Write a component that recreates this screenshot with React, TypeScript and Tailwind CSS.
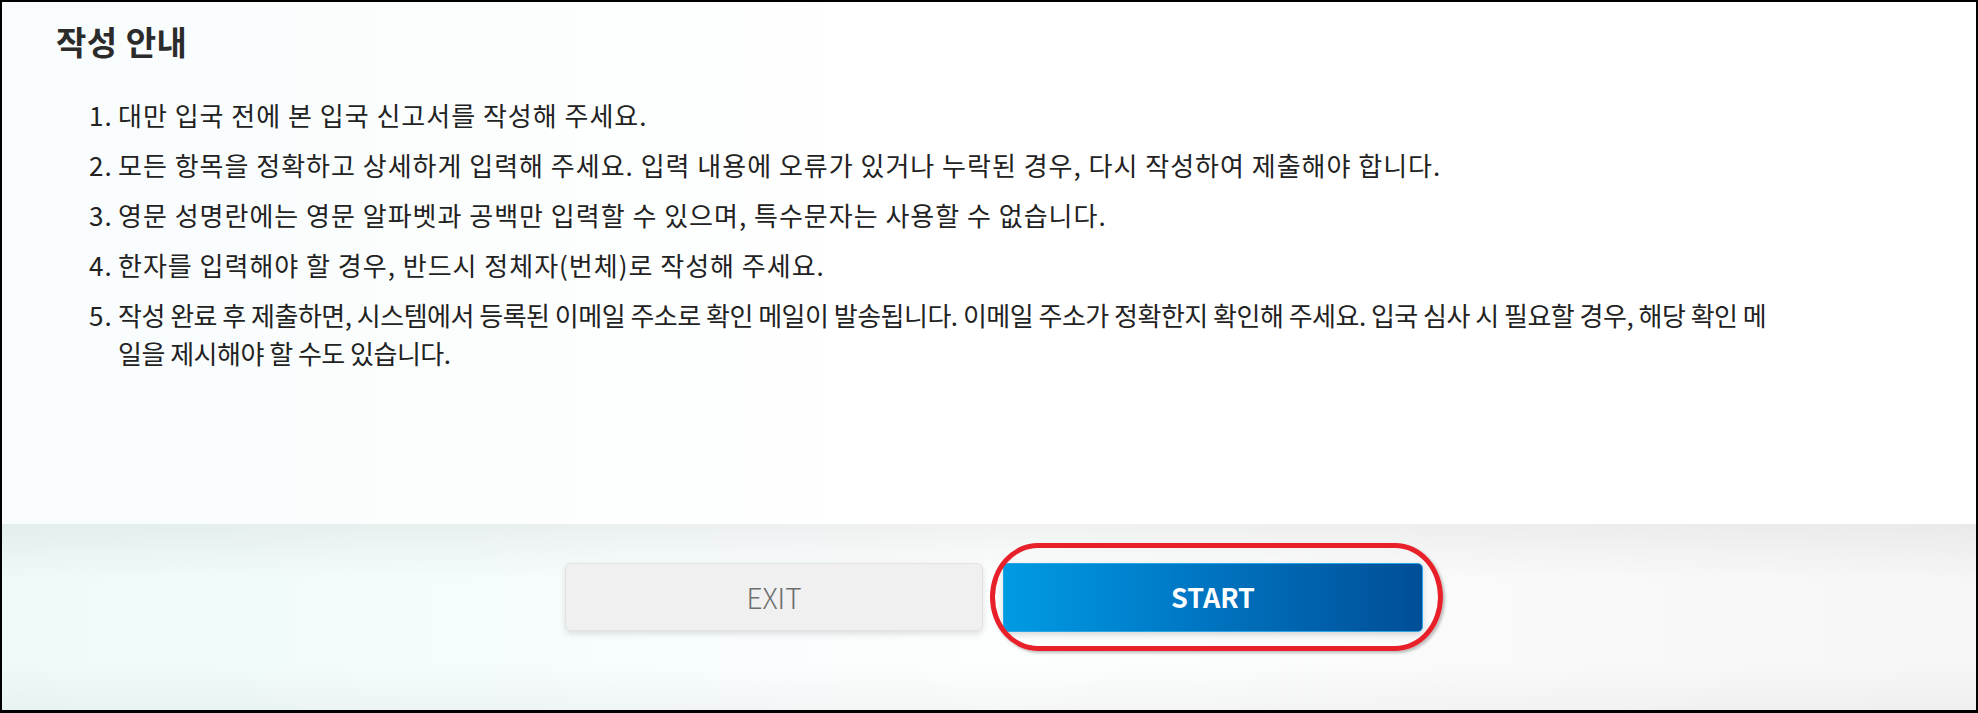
const items: string[] = [
  '대만 입국 전에 본 입국 신고서를 작성해 주세요.',
  '모든 항목을 정확하고 상세하게 입력해 주세요. 입력 내용에 오류가 있거나 누락된 경우, 다시 작성하여 제출해야 합니다.',
  '영문 성명란에는 영문 알파벳과 공백만 입력할 수 있으며, 특수문자는 사용할 수 없습니다.',
  '한자를 입력해야 할 경우, 반드시 정체자(번체)로 작성해 주세요.',
  '작성 완료 후 제출하면, 시스템에서 등록된 이메일 주소로 확인 메일이 발송됩니다. 이메일 주소가 정확한지 확인해 주세요. 입국 심사 시 필요할 경우, 해당 확인 메일을 제시해야 할 수도 있습니다.',
];

export default function App(): JSX.Element {
  return (
    <div className="flex h-[713px] w-full flex-col border-2 border-b-[3px] border-black font-['Noto_Sans_CJK_KR','Noto_Sans',sans-serif]">
      {/* guide text */}
      <div className="flex-1 bg-[linear-gradient(to_right,#f8fcfc,#ffffff_45%)] pl-[54px] pt-[20px]">
        <h2 className="text-[33px] font-bold leading-[38px] tracking-[0.5px] text-[#2b2b2b]">작성 안내</h2>
        <ol className="ml-[33px] mt-[36px] flex w-[1687px] flex-col gap-[12.5px] text-[26px] leading-[37.5px] tracking-[1px] text-[#222]">
          {items.map((text, i) => (
            <li key={i} className="flex">
              <span className="w-[29px] shrink-0">{i + 1}.</span>
              <span className={i === 4 ? 'tracking-[-0.5px]' : ''}>{text}</span>
            </li>
          ))}
        </ol>
      </div>

      {/* buttons */}
      <div className="relative h-[186px] bg-[linear-gradient(to_right,#eefafa,#fdfefe_50%,#f6f6f6)]">
        <div className="absolute inset-0 bg-[linear-gradient(to_bottom,rgba(0,0,0,0.05),rgba(0,0,0,0)_30%,rgba(0,0,0,0)_75%,rgba(0,0,0,0.03))]" />
        <div className="relative flex h-full items-start justify-center gap-[20px] pl-[10px] pt-[39px]">
          <button
            type="button"
            className="h-[68px] w-[418px] rounded-[6px] border border-[#e2e2e2] bg-[#f0f0f0] text-[28px] font-light text-[#6e6e6e] shadow-[0_3px_6px_rgba(0,0,0,0.12)]"
          >
            EXIT
          </button>
          <div className="relative">
            <button
              type="button"
              className="h-[69px] w-[420px] rounded-[5px] border border-[#2aa6e6] bg-[linear-gradient(to_right,#009be3,#0077c4_45%,#004e96)] text-[27px] font-bold text-white shadow-[0_3px_6px_rgba(0,0,0,0.15)]"
            >
              START
            </button>
            <div className="pointer-events-none absolute -bottom-[19px] -left-[13px] -right-[20px] -top-[20px] rounded-[48px/54px] border-[5px] border-[#e8202a] shadow-[2px_2px_3px_rgba(0,0,0,0.25)]" />
          </div>
        </div>
      </div>
    </div>
  );
}
